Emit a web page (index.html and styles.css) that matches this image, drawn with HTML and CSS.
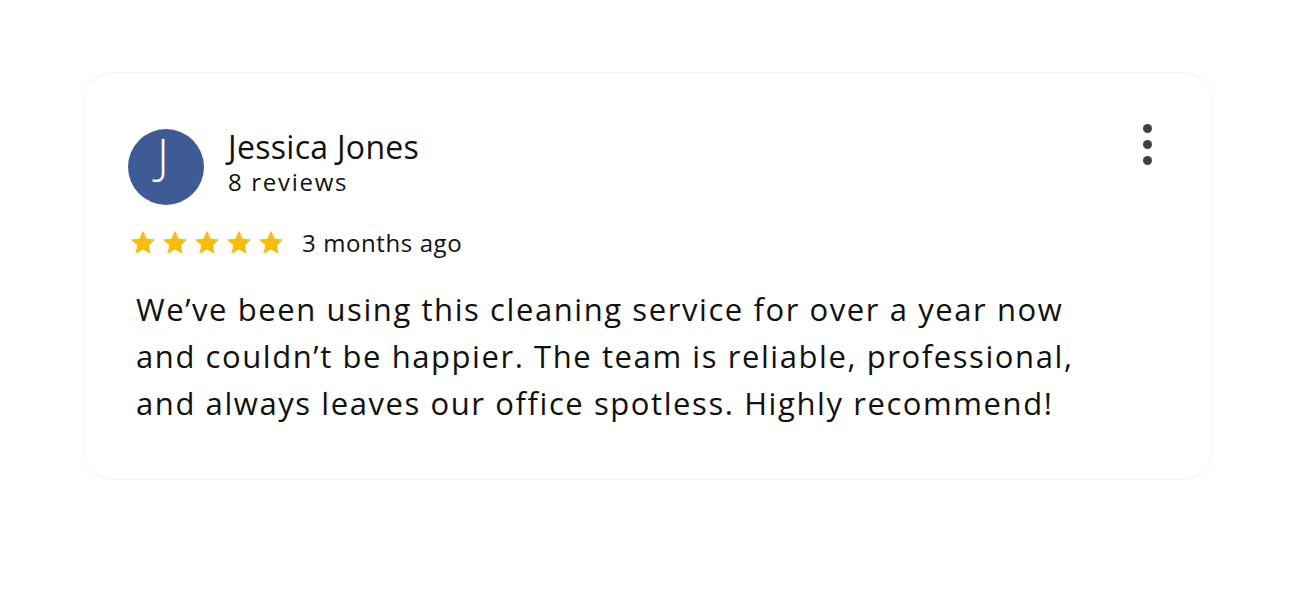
FILE: index.html
```html
<!DOCTYPE html>
<html>
<head>
    <link rel="stylesheet" href="styles.css">
    <title>Review</title>
</head>
<body>
    <div class="review-card">
        <div class="review-head">
            <div class="avatar">J</div>
            <div class="author">
                <div class="author-name">Jessica Jones</div>
                <div class="author-count">8 reviews</div>
            </div>
            <div class="more">
                <span class="dot"></span>
                <span class="dot"></span>
                <span class="dot"></span>
            </div>
        </div>

        <div class="rating">
            <div class="stars">
                <svg class="star" viewBox="0 0 24 24"><path d="M12 2.2l2.9 6.3 6.9.7-5.2 4.6 1.5 6.8L12 17.1l-6.1 3.5 1.5-6.8-5.2-4.6 6.9-.7z"/></svg>
                <svg class="star" viewBox="0 0 24 24"><path d="M12 2.2l2.9 6.3 6.9.7-5.2 4.6 1.5 6.8L12 17.1l-6.1 3.5 1.5-6.8-5.2-4.6 6.9-.7z"/></svg>
                <svg class="star" viewBox="0 0 24 24"><path d="M12 2.2l2.9 6.3 6.9.7-5.2 4.6 1.5 6.8L12 17.1l-6.1 3.5 1.5-6.8-5.2-4.6 6.9-.7z"/></svg>
                <svg class="star" viewBox="0 0 24 24"><path d="M12 2.2l2.9 6.3 6.9.7-5.2 4.6 1.5 6.8L12 17.1l-6.1 3.5 1.5-6.8-5.2-4.6 6.9-.7z"/></svg>
                <svg class="star" viewBox="0 0 24 24"><path d="M12 2.2l2.9 6.3 6.9.7-5.2 4.6 1.5 6.8L12 17.1l-6.1 3.5 1.5-6.8-5.2-4.6 6.9-.7z"/></svg>
            </div>
            <span class="when">3 months ago</span>
        </div>

        <p class="review-text">We’ve been using this cleaning service for over a year now and couldn’t be happier. The team is reliable, professional, and always leaves our office spotless. Highly recommend!</p>
    </div>
</body>
</html>
```

FILE: styles.css
```css
body {
    margin: 0;
    background-color: white;
    font-family: 'Open Sans', sans-serif;
    color: #111111;
}
.review-card {
    margin: 72px 0 0 83px;
    width: 1130px;
    height: 408px;
    box-sizing: border-box;
    border: 1px solid #f3f3f3;
    border-radius: 30px;
    padding: 56px 60px 0 44px;
}
.review-head {
    display: flex;
    align-items: flex-start;
}
.avatar {
    width: 76px;
    height: 76px;
    box-sizing: border-box;
    padding: 0 6px 24px 0;
    border-radius: 50%;
    background-color: #3f5b95;
    color: #ffffff;
    font-size: 48px;
    font-weight: 300;
    line-height: 1;
    display: flex;
    align-items: center;
    justify-content: center;
    flex-shrink: 0;
}
.author {
    margin: 2px 0 0 24px;
    flex: 1;
}
.author-name {
    font-size: 32px;
    line-height: 32px;
    letter-spacing: 0.3px;
}
.author-count {
    font-size: 24px;
    line-height: 38px;
    letter-spacing: 1.7px;
}
.more {
    display: flex;
    flex-direction: column;
    gap: 7px;
    margin-top: -5px;
}
.dot {
    width: 9px;
    height: 9px;
    border-radius: 50%;
    background-color: #3e4144;
}
.rating {
    display: flex;
    align-items: center;
    margin-top: 21px;
}
.stars {
    display: flex;
    gap: 2px;
}
.star {
    width: 30px;
    height: 30px;
    fill: #fbbc0b;
}
.when {
    font-size: 24px;
    letter-spacing: 0.6px;
    margin-left: 16px;
}
.review-text {
    margin: 27px 0 0 8px;
    font-size: 31px;
    line-height: 47px;
    letter-spacing: 1.58px;
    max-width: 960px;
}
```
